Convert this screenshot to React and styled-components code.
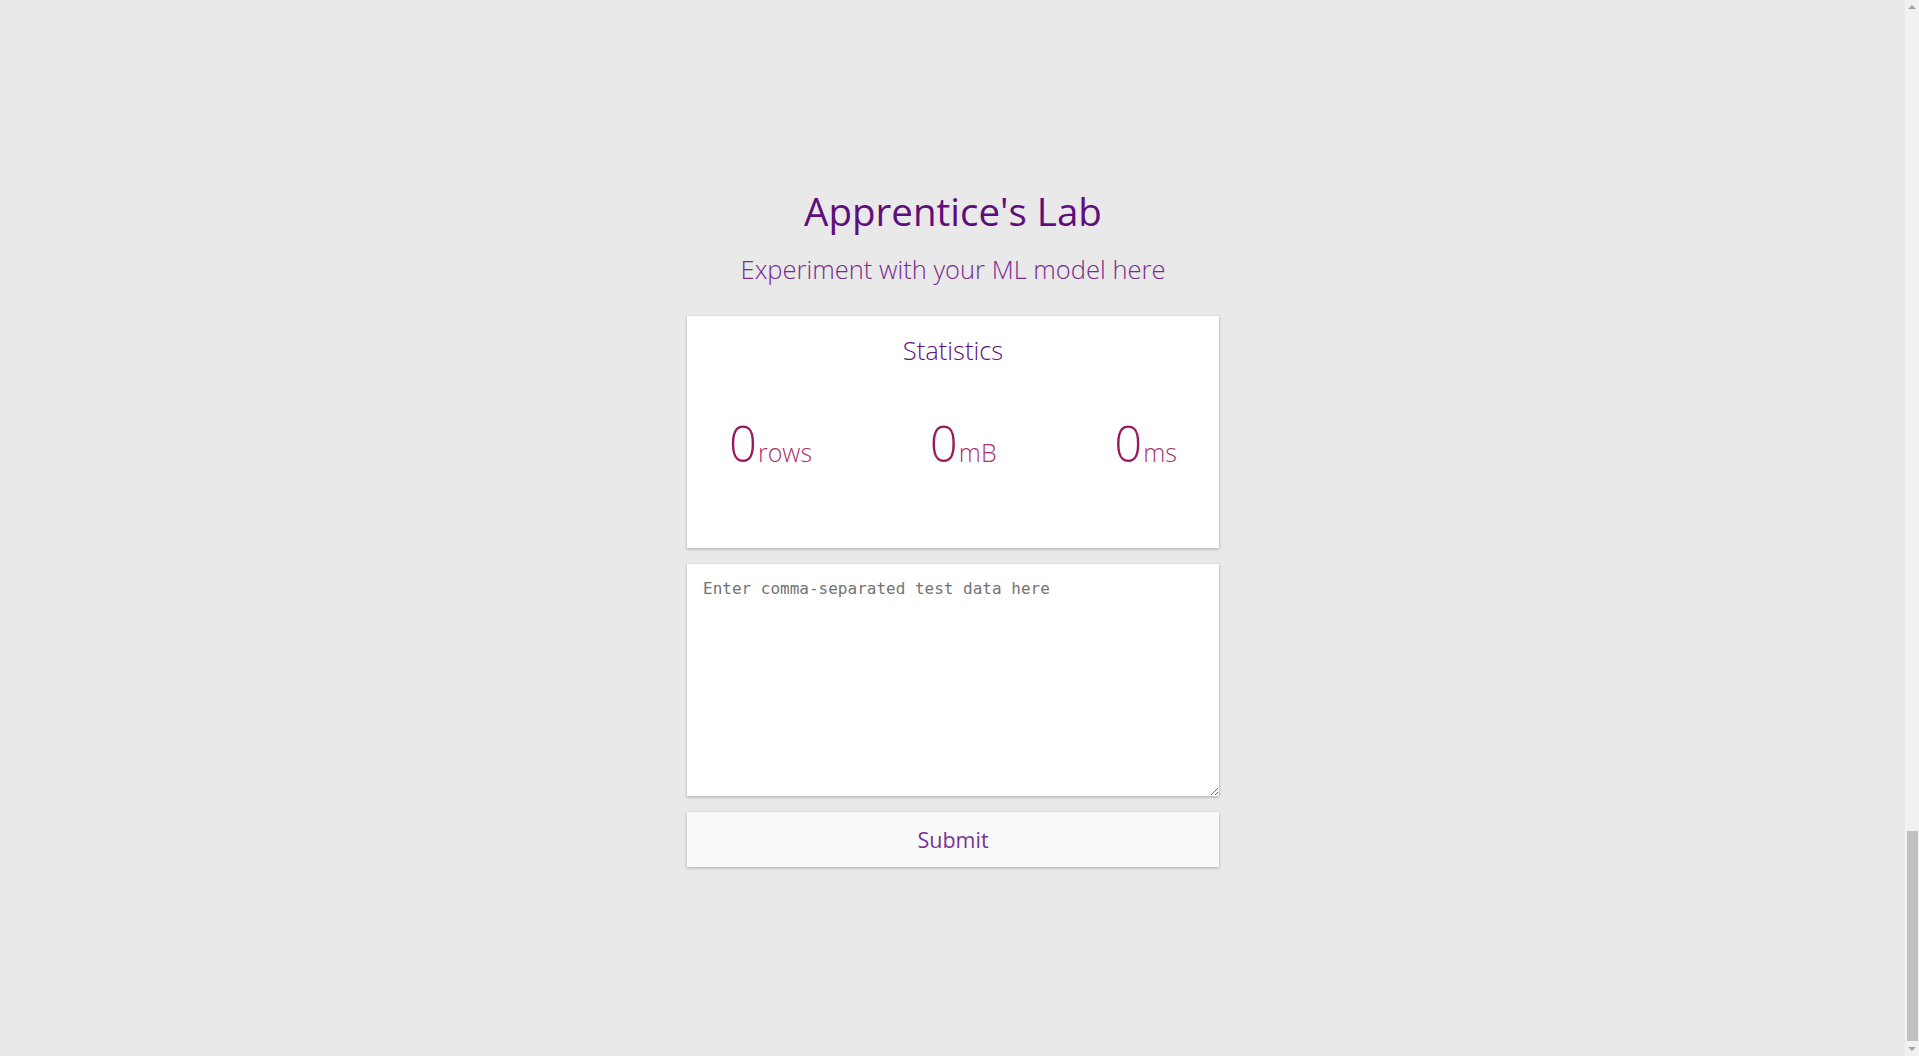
import React, { useState } from "react";
import styled, { createGlobalStyle } from "styled-components";

const GlobalStyle = createGlobalStyle`
  body {
    margin: 0;
    background-color: #e8e9e8;
    font-family: "Open Sans", "Noto Sans", sans-serif;
  }
`;

const Page = styled.main`
  display: flex;
  flex-direction: column;
  align-items: center;
  padding: 185px 13px 190px 0;
`;

// stand-in for the browser's classic scrollbar seen in the screenshot
const ScrollTrack = styled.div`
  position: fixed;
  top: 0;
  right: 0;
  width: 14px;
  height: 100vh;
  background: #f0f1f0;
  display: flex;
  flex-direction: column;
  align-items: center;
  justify-content: space-between;
`;

const Arrow = styled.div`
  width: 0;
  height: 0;
  margin: 5px 0;
  border-left: 4px solid transparent;
  border-right: 4px solid transparent;
  ${(p) =>
    p.up
      ? "border-bottom: 4px solid #a3a3a3;"
      : "border-top: 4px solid #a3a3a3;"}
`;

const Thumb = styled.div`
  width: 11px;
  height: 210px;
  margin-top: auto;
  margin-bottom: 1px;
  background: #c1c1c1;
`;

const Title = styled.h1`
  margin: 0;
  font-size: 38.5px;
  font-weight: 400;
  line-height: 52px;
  color: #5f0f7b;
`;

const Subtitle = styled.h2`
  margin: 15px 0 30px;
  font-size: 25.5px;
  font-weight: 300;
  line-height: 34px;
  color: #7a2b90;
`;

const Column = styled.div`
  width: 532px;
  display: flex;
  flex-direction: column;
  gap: 16px;
`;

const Card = styled.section`
  height: 232px;
  box-sizing: border-box;
  background: #fff;
  box-shadow: 0 1px 3px rgba(0, 0, 0, 0.28);
  padding: 18px 42px 0;
`;

const CardTitle = styled.h3`
  margin: 0;
  text-align: center;
  font-size: 25.5px;
  font-weight: 300;
  line-height: 32px;
  color: #5f127a;
`;

const StatRow = styled.div`
  display: flex;
  justify-content: space-between;
  align-items: baseline;
  margin-top: 47px;
`;

const Stat = styled.div`
  display: flex;
  align-items: baseline;
  color: #9b1a5e;
`;

const Value = styled.span`
  font-size: 49px;
  font-weight: 300;
  line-height: 60px;
`;

const Unit = styled.span`
  font-size: 25px;
  font-weight: 300;
  color: #a9336f;
  margin-left: 1px;
`;

const DataInput = styled.textarea`
  height: 232px;
  box-sizing: border-box;
  border: none;
  outline: none;
  background: #fff;
  box-shadow: 0 1px 3px rgba(0, 0, 0, 0.28);
  padding: 15px 16px;
  font-family: "DejaVu Sans Mono", monospace;
  font-size: 16px;
  color: #333;
  resize: vertical;

  &::placeholder {
    color: #737373;
  }
`;

const SubmitButton = styled.button`
  height: 55px;
  border: none;
  background: #f8f9f9;
  box-shadow: 0 1px 3px rgba(0, 0, 0, 0.28);
  font-family: "Open Sans", "Noto Sans", sans-serif;
  font-size: 21.5px;
  font-weight: 400;
  color: #7a3595;
  cursor: pointer;
`;

const stats = [
  { label: "rows", value: 0 },
  { label: "mB", value: 0 },
  { label: "ms", value: 0 },
];

function App() {
  const [data, setData] = useState("");

  return (
    <>
      <GlobalStyle />
      <Page>
        <Title>Apprentice's Lab</Title>
        <Subtitle>Experiment with your ML model here</Subtitle>
        <Column>
          <Card>
            <CardTitle>Statistics</CardTitle>
            <StatRow>
              {stats.map((s) => (
                <Stat key={s.label}>
                  <Value>{s.value}</Value>
                  <Unit>{s.label}</Unit>
                </Stat>
              ))}
            </StatRow>
          </Card>
          <DataInput
            value={data}
            onChange={(ev) => setData(ev.target.value)}
            placeholder="Enter comma-separated test data here"
          />
          <SubmitButton onClick={() => console.log(data)}>Submit</SubmitButton>
        </Column>
      </Page>
      <ScrollTrack>
        <Arrow up />
        <Thumb />
        <Arrow />
      </ScrollTrack>
    </>
  );
}

export default App;
